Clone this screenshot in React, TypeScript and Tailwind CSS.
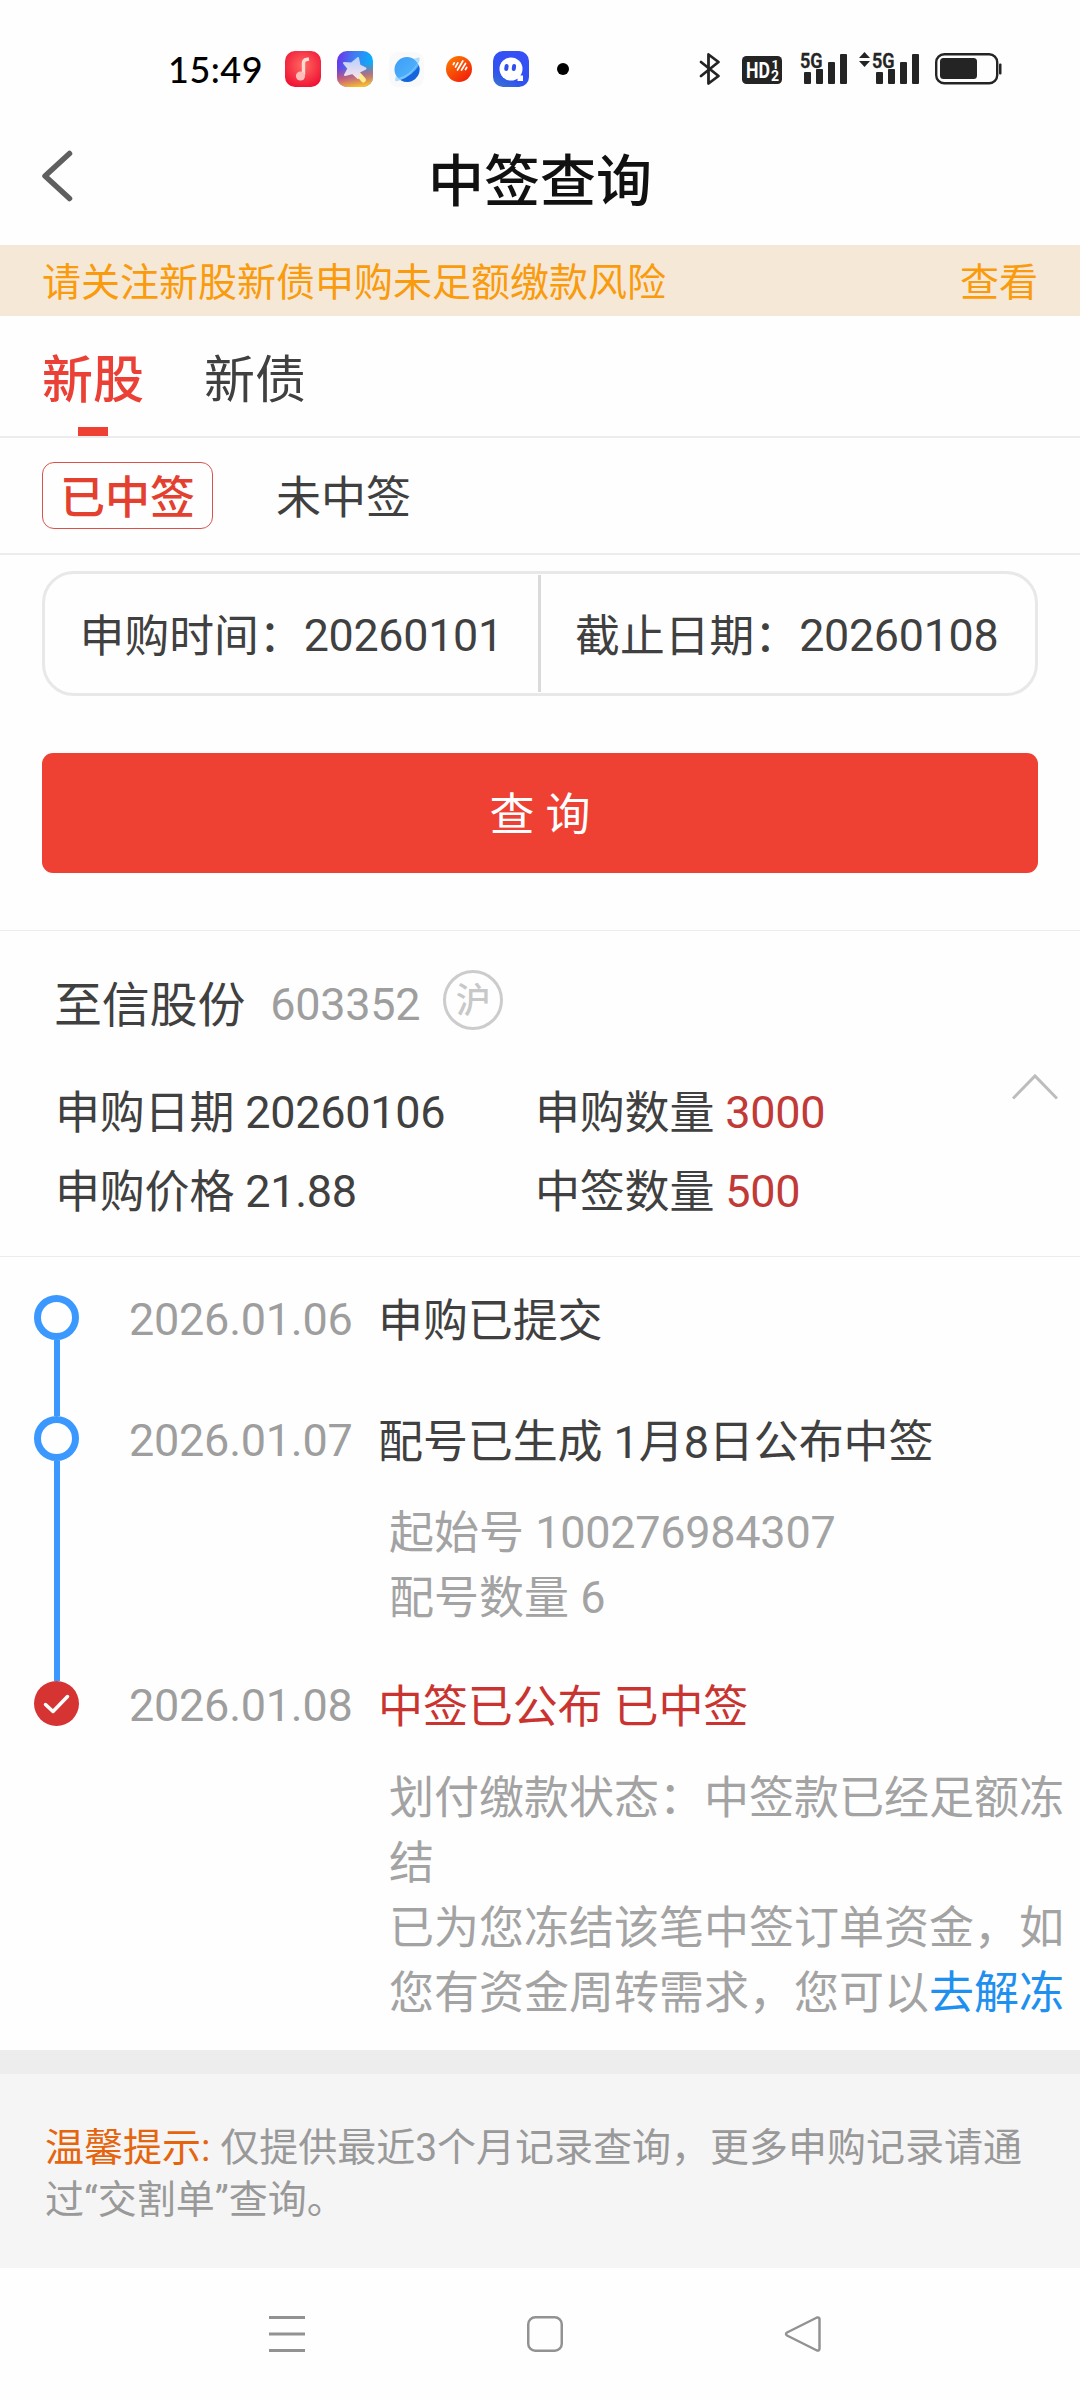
import React from 'react';

const han = "font-['Roboto','Noto_Sans_CJK_SC',sans-serif]";

function SignalBars({ arrows = false }: { arrows?: boolean }) {
  return (
    <svg className="overflow-visible" width={arrows ? 62 : 48} height="34" viewBox={arrows ? '-14 0 62 34' : '0 0 48 34'} fill="#242424">
      {arrows && (
        <g>
          <path d="M-13 8 L-7.5 2 L-2 8z" />
          <path d="M-13 11 L-7.5 17 L-2 11z" />
        </g>
      )}
      <text x="0" y="17.500" fontFamily="Roboto" fontWeight="600" fontSize="21" textLength="22.500" lengthAdjust="spacingAndGlyphs" stroke="#242424" strokeWidth=".4">5G</text>
      <rect x="4" y="22" width="7" height="12" rx="1" />
      <rect x="16" y="19" width="7" height="15" rx="1" />
      <rect x="28" y="12" width="7" height="22" rx="1" />
      <rect x="40" y="4" width="7" height="30" rx="1" />
    </svg>
  );
}

function StatusBar() {
  return (
    <div className="flex h-[138px] justify-between pr-[78px] pl-[168px]">
      <div className="flex h-[138px] items-center">
        <span className="w-[117px] font-['Lato'] text-[36px] leading-none font-medium tracking-[0.5px] text-black">15:49</span>
        <svg width="290" height="36" viewBox="285 51 290 36">
          <defs>
            <radialGradient id="music" cx=".5" cy=".4" r=".7">
              <stop offset="0" stopColor="#ff6a62" />
              <stop offset="1" stopColor="#ee0a30" />
            </radialGradient>
            <linearGradient id="wand" x1="0" y1=".2" x2="1" y2=".4">
              <stop offset="0" stopColor="#6a35e8" />
              <stop offset=".45" stopColor="#3f7df2" />
              <stop offset="1" stopColor="#05b4fb" />
            </linearGradient>
            <linearGradient id="wandBase" x1=".5" y1=".4" x2=".6" y2="1">
              <stop offset="0" stopColor="#e54a4a" stopOpacity="0" />
              <stop offset=".5" stopColor="#e8605a" stopOpacity=".75" />
              <stop offset="1" stopColor="#ffc02a" />
            </linearGradient>
            <linearGradient id="star" x1="0" y1="0" x2="0" y2="1">
              <stop offset="0" stopColor="#b9d0fb" />
              <stop offset="1" stopColor="#f8e2ea" />
            </linearGradient>
            <linearGradient id="planet" x1="0" y1="0" x2="1" y2="1">
              <stop offset="0" stopColor="#3b9cf8" />
              <stop offset=".5" stopColor="#4aabfa" />
              <stop offset="1" stopColor="#56b8fb" />
            </linearGradient>
            <linearGradient id="orange" x1="0" y1="0" x2=".8" y2="1">
              <stop offset="0" stopColor="#ff8200" />
              <stop offset="1" stopColor="#f01c0c" />
            </linearGradient>
            <linearGradient id="quark" x1="0" y1="1" x2=".5" y2="0">
              <stop offset="0" stopColor="#3a78c8" />
              <stop offset=".4" stopColor="#2f52f0" />
              <stop offset="1" stopColor="#3650f5" />
            </linearGradient>
          </defs>
          <rect x="285" y="51" width="36" height="36" rx="10" fill="url(#music)" />
          <path d="M303.500 75 V63 Q303.500 60 306.500 59.500 L309 59" fill="none" stroke="#ffd9d4" strokeWidth="3.400" />
          <circle cx="300.500" cy="76" r="4.600" fill="#ffbdb9" />
          <rect x="337" y="51" width="36" height="36" rx="10" fill="url(#wand)" />
          <rect x="337" y="51" width="36" height="36" rx="10" fill="url(#wandBase)" />
          <path d="M359.500 75.500 L363.500 80" stroke="#fff08a" strokeWidth="5" strokeLinecap="round" />
          <path d="M358 58 L359.500 65.500 L365.500 68.500 L359.500 71.500 L358 78 L352.500 73 L345 75 L348.500 68.500 L344 63 L351.500 63.500z" fill="url(#star)" stroke="url(#star)" strokeWidth="2" strokeLinejoin="round" />
          <rect x="389" y="52" width="35" height="35" rx="9" fill="#f9f9f9" />
          <circle cx="407" cy="69.500" r="12.500" fill="url(#planet)" />
          <path d="M419 65.500 A12.500 12.500 0 0 1 400.500 80 Q412 76 419 65.500z" fill="#1765dc" />
          <path d="M396 76 L395 80 Q395 82 399 80.500 Q412 76 419 62 Q420.500 57 418.500 57.500 L413.500 59 Q418 61 417 64 Q410 75 398.500 78z" fill="#8fd0ff" opacity=".7" />
          <circle cx="459" cy="69" r="13" fill="url(#orange)" />
          <path d="M453.300 64.500 L454.300 62.800 M455.500 67 L457.800 62.800 M457.500 70 L462.800 61 M461.500 70 L465.500 63.500 M465.500 69.500 L466.700 67.500" stroke="#fff" strokeWidth="1.700" strokeLinecap="round" fill="none" />
          <rect x="493" y="51" width="36" height="36" rx="10" fill="url(#quark)" />
          <circle cx="511" cy="69" r="11.500" fill="#fff" />
          <path d="M517 75.500 h6 v5.500 h-5.500 v-3z" fill="#fff" />
          <rect x="504.500" y="64" width="4" height="7" rx="2" fill="#2f4fee" transform="rotate(8 506 67)" />
          <rect x="512" y="64" width="4" height="7" rx="2" fill="#2f4fee" transform="rotate(8 514 67)" />
          <circle cx="563" cy="69" r="6" fill="#000" />
        </svg>
      </div>
      <div className="flex h-[138px] items-center">
        <svg width="22" height="34" viewBox="0 0 22 34" fill="none" stroke="#242424" strokeWidth="2.800" strokeLinejoin="round" strokeLinecap="round">
          <path d="M2 10 L19.500 24 L9.500 31.500 V2.500 L19.500 10 L2 24" />
        </svg>
        <svg className="mt-[2px] ml-[21px]" width="40" height="28" viewBox="0 0 40 28">
          <rect width="40" height="28" rx="4.500" fill="#242424" />
          <text x="4" y="22" fill="#fff" fontFamily="Roboto" fontWeight="700" fontSize="22" textLength="24" lengthAdjust="spacingAndGlyphs">HD</text>
          <text x="29.500" y="13" fill="#fff" fontFamily="Roboto" fontWeight="700" fontSize="13">1</text>
          <text x="29" y="25" fill="#fff" fontFamily="Roboto" fontWeight="700" fontSize="14">2</text>
        </svg>
        <div className="ml-[18px] flex -translate-y-[2px] gap-[10px]">
          <SignalBars />
          <SignalBars arrows />
        </div>
        <svg className="ml-[15px]" width="67" height="32" viewBox="0 0 67 32">
          <rect x="1.200" y="1.200" width="61" height="29" rx="8" fill="none" stroke="#242424" strokeWidth="2.400" />
          <rect x="5" y="5" width="37" height="21" rx="3.500" fill="#242424" />
          <rect x="64" y="10.500" width="2.500" height="11" rx="1" fill="#242424" />
        </svg>
      </div>
    </div>
  );
}

function TitleBar() {
  return (
    <div className="grid h-[107px] grid-cols-[1fr_auto_1fr] items-center">
      <svg className="mb-[31px] ml-[40px]" width="36" height="56" viewBox="0 0 36 56" fill="none" stroke="#5f5f5f" strokeWidth="5.500" strokeLinecap="round" strokeLinejoin="round">
        <path d="M29.500 5.500 L5 28 L29.500 50.500" />
      </svg>
      <h1 className="mb-[19px] text-[56px] leading-[80px] font-medium text-[#111]">中签查询</h1>
    </div>
  );
}

/* Latin digits: slightly tighter and optically centred against the Han glyphs. */
function Num({ children, className = '' }: { children: React.ReactNode; className?: string }) {
  return <span className={`align-[1px] leading-none tracking-[-0.27px] ${className}`}>{children}</span>;
}

function Field({ label, value }: { label: string; value: string }) {
  return (
    <div className="flex-1 pt-[6px] text-center text-[44.8px] leading-[113px] whitespace-nowrap">
      {label}：<Num>{value}</Num>
    </div>
  );
}

function Pair({ label, value, hot = false }: { label: string; value: string; hot?: boolean }) {
  return (
    <div>
      {label} <Num className={hot ? 'text-[#c13a37]' : ''}>{value}</Num>
    </div>
  );
}

function Step({
  date,
  title,
  done = false,
  last = false,
  className,
  children,
}: {
  date: string;
  title: string;
  done?: boolean;
  last?: boolean;
  className: string;
  children?: React.ReactNode;
}) {
  return (
    <div className={`flex ${className}`}>
      <div className="ml-[34px] flex w-[45px] flex-col items-center">
        {done ? (
          <svg className="shrink-0" width="45" height="45" viewBox="0 0 45 45">
            <circle cx="22.500" cy="22.500" r="22.500" fill="#d63333" />
            <path d="M11.500 23.500 L19 30.500 L33.500 15.500" fill="none" stroke="#fff" strokeWidth="3.500" strokeLinecap="round" strokeLinejoin="round" />
          </svg>
        ) : (
          <div className="h-[45px] w-[45px] shrink-0 rounded-full border-[7px] border-[#3b98ff]" />
        )}
        {!last && <div className="w-[6px] flex-1 bg-[#3b98ff]" />}
      </div>
      <div className="mt-px ml-[50px] w-[249px] leading-[48px] tracking-[-0.25px] text-[#9e9e9e]">{date}</div>
      <div className="flex-1 pt-[3px]">
        <div className={`leading-[48px] tracking-[-0.1px] ${done ? 'text-[#c93431]' : 'text-[#404040]'}`}>{title}</div>
        {children && <div className="mt-[34px] ml-[11px] leading-[65px] text-[#a3a3a3]">{children}</div>}
      </div>
    </div>
  );
}

export default function App() {
  return (
    <div className={`flex h-[2400px] w-[1080px] flex-col overflow-hidden bg-[#fefefe] text-[#404040] ${han}`}>
      <StatusBar />
      <TitleBar />
      <div className="flex h-[71px] items-center justify-between bg-[#f6e8d7] px-[42px] pt-[6px] text-[39px] leading-none text-[#f99b0c]">
        <span>请关注新股新债申购未足额缴款风险</span>
        <span>查看</span>
      </div>

      <div className="flex h-[122px] gap-[60px] border-b-[2px] border-[#ececec] pl-[42px] text-[51px]">
        <div className="flex flex-col items-center justify-between font-medium text-[#ea4035]">
          <span className="mt-[27px] leading-[76px]">新股</span>
          <div className="h-[9px] w-[30px] bg-[#ef4034]" />
        </div>
        <span className="mt-[27px] leading-[76px]">新债</span>
      </div>

      <div className="flex h-[117px] items-start gap-[63px] border-b-[2px] border-[#ececec] pt-[24px] pl-[42px] text-[45px] leading-[67px]">
        <div className="h-[67px] w-[171px] rounded-[12px] border border-[#d9534c] pt-[2px] text-center font-medium text-[#e4402f]">已中签</div>
        <span className="pt-[3px]">未中签</span>
      </div>

      <div className="mx-[42px] mt-[16px] flex h-[125px] rounded-[32px] border-[3px] border-[#e8e8e8] pr-[2px]">
        <Field label="申购时间" value="20260101" />
        <div className="my-px w-[3px] bg-[#dadada]" />
        <Field label="截止日期" value="20260108" />
      </div>

      <button className="mx-[42px] mt-[57px] flex h-[120px] shrink-0 items-center justify-center rounded-[11px] bg-[#ef4034] pt-[6px] text-[45px] text-white">
        查 询
      </button>

      <div className="mt-[57px] h-[327px] border-y border-[#ececec] pt-[38px] pl-[55px] text-[45px]">
        <div className="-ml-px flex h-[62px] items-center">
          <span className="mt-[11px] text-[48px] leading-[62px] tracking-[-0.2px]">至信股份</span>
          <span className="mt-[9px] ml-[25px] leading-[62px] tracking-[-0.3px] text-[#9e9e9e]">603352</span>
          <span className="ml-[23px] flex h-[60px] w-[60px] items-center justify-center rounded-full border-[3px] border-[#ccc] pt-[3px] text-[35px] leading-none font-medium text-[#c8c8c8]">沪</span>
        </div>
        <div className="mt-[41px] flex">
          <div className="mt-[2px] grid w-[957px] grid-cols-[480px_1fr] leading-[79px] tracking-[-0.2px]">
            <Pair label="申购日期" value="20260106" />
            <Pair label="申购数量" value="3000" hot />
            <Pair label="申购价格" value="21.88" />
            <Pair label="中签数量" value="500" hot />
          </div>
          <svg className="mt-[1px]" width="46" height="28" viewBox="0 0 46 28" fill="none" stroke="#bdbdbd" strokeWidth="3">
            <path d="M1 25.500 L23 3 L45 25.500" />
          </svg>
        </div>
      </div>

      <div className="pt-[38px] text-[45px]">
        <Step date="2026.01.06" title="申购已提交" className="h-[121px]" />
        <Step date="2026.01.07" title="配号已生成 1月8日公布中签" className="h-[265px]">
          <div>
            起始号 <Num>100276984307</Num>
          </div>
          <div>
            配号数量 <Num>6</Num>
          </div>
        </Step>
        <Step date="2026.01.08" title="中签已公布 已中签" done last className="h-[369px]">
          <div className="w-[680px]">划付缴款状态：中签款已经足额冻结</div>
          <div className="w-[680px]">
            已为您冻结该笔中签订单资金，如您有资金周转需求，您可以<span className="text-[#1f8ff0]">去解冻</span>
          </div>
        </Step>
      </div>

      <div className="h-[218px] border-t-[24px] border-[#ededed] bg-[#f5f5f5] px-[45px] pt-[48px] text-[39px] leading-[52px] text-[#999]">
        <span className="text-[#e5650f]">温馨提示:</span> 仅提供最近3个月记录查询，更多申购记录请通过“交割单”查询。
      </div>

      <div className="flex flex-1 items-center justify-center gap-[220px] pl-[10px]">
        <svg width="38" height="38" viewBox="0 0 38 38" stroke="#929292" strokeWidth="3">
          <path d="M1 2.500 H37 M1 19 H37 M1 35.500 H37" />
        </svg>
        <svg width="38" height="38" viewBox="0 0 38 38" fill="none" stroke="#929292" strokeWidth="2.500">
          <rect x="2.250" y="2.250" width="33.500" height="33.500" rx="7" />
        </svg>
        <svg width="38" height="38" viewBox="0 0 38 38" fill="none" stroke="#929292" strokeWidth="2.500" strokeLinejoin="round">
          <path d="M33 2.500 L3 17.500 Q1 19 3 20.500 L33 35.500 Q35.500 36 35.500 33.500 V4.500 Q35.500 2 33 2.500z" />
        </svg>
      </div>
    </div>
  );
}
